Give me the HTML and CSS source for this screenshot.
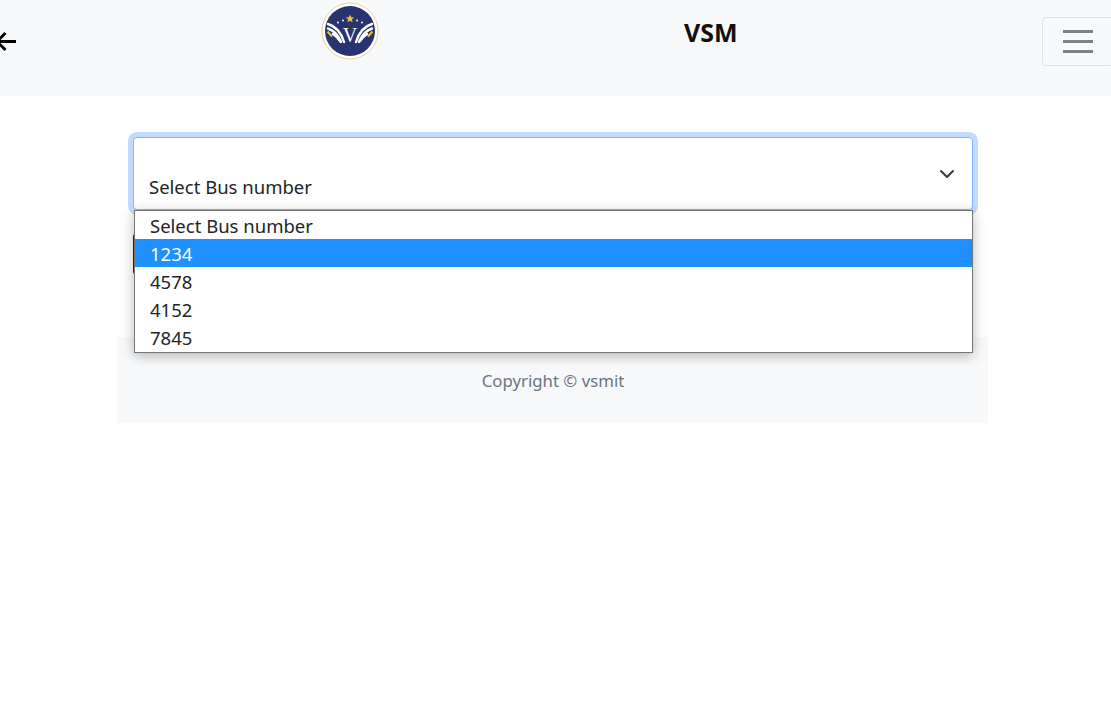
FILE: index.html
```html
<!DOCTYPE html>
<html lang="en">
<head>
    <meta charset="UTF-8">
    <meta name="viewport" content="width=device-width, initial-scale=1.0">
    <title>VSM</title>
    <link rel="stylesheet" href="styles.css">
</head>
<body>
    <nav class="navbar">
        <a class="back-link" href="#" aria-label="Back">
            <svg width="24" height="24" viewBox="0 0 24 24" fill="none" stroke="#000" stroke-width="3">
                <path d="M3 12.5H21"/>
                <path d="M10.5 4L2 12.5L10.5 21"/>
            </svg>
        </a>
        <a class="brand" href="#" aria-label="VSM home">
            <svg width="58" height="58" viewBox="0 0 58 58">
                <circle cx="29" cy="29" r="28" fill="#fff" stroke="#e3d59a" stroke-width="1"/>
                <circle cx="29" cy="29" r="25" fill="#27346f"/>
                <path d="M29 12.500l1.200 2.700 2.900.3-2.200 1.900.7 2.900-2.600-1.500-2.600 1.500.7-2.900-2.200-1.900 2.900-.3z" fill="#f2c230"/>
                <g fill="#fff">
                    <circle cx="17" cy="20.500" r="1"/>
                    <circle cx="22" cy="18.500" r="1"/>
                    <circle cx="36" cy="18.500" r="1"/>
                    <circle cx="41" cy="20.500" r="1"/>
                </g>
                <g fill="none" stroke="#fff" stroke-width="2.400" stroke-linecap="round">
                    <path d="M7 22C14 24 20 30 23 40"/>
                    <path d="M51 22C44 24 38 30 35 40"/>
                    <path d="M7 26.500C12 28 17 33 20 40"/>
                    <path d="M51 26.500C46 28 41 33 38 40"/>
                    <path d="M12 32C15 34 17 36 19 39"/>
                    <path d="M46 32C43 34 41 36 39 39"/>
                </g>
                <g fill="none" stroke="#f2c230" stroke-width="2">
                    <path d="M6.500 29.500L11 34.500"/>
                    <path d="M51.500 29.500L47 34.500"/>
                </g>
                <text class="logo-letter" x="29" y="40" text-anchor="middle">V</text>
            </svg>
        </a>
        <h1 class="nav-title">VSM</h1>
        <button class="nav-toggler" aria-label="Toggle navigation">
            <span class="toggler-bar"></span>
            <span class="toggler-bar"></span>
            <span class="toggler-bar"></span>
        </button>
    </nav>

    <main class="page">
        <form class="bus-form">
            <div class="select-box">
                <span class="select-value">Select Bus number</span>
                <svg class="select-arrow" width="16" height="16" viewBox="0 0 16 16" fill="none" stroke="#343a40" stroke-width="2" stroke-linecap="round" stroke-linejoin="round">
                    <path d="M2 5l6 6 6-6"/>
                </svg>
                <ul class="select-list">
                    <li>Select Bus number</li>
                    <li class="active">1234</li>
                    <li>4578</li>
                    <li>4152</li>
                    <li>7845</li>
                </ul>
            </div>
            <button class="submit-btn" type="button" aria-label="Submit"></button>
        </form>
        <footer class="page-footer">Copyright © vsmit</footer>
    </main>
</body>
</html>
```

FILE: styles.css
```css
* { box-sizing: border-box; }
body {
    margin: 0;
    background: #fff;
    color: #212529;
    font-family: "Noto Sans", "Open Sans", sans-serif;
    overflow: hidden;
}
.navbar {
    display: flex;
    height: 96px;
    background-color: #f8f9fa;
    position: relative;
    overflow: hidden;
}
.back-link { margin: 29px 0 0 -5px; height: 24px; }
.brand { margin: 2px 0 0 302px; height: 58px; }
.logo-letter { font-family: "Liberation Serif", serif; font-size: 20px; fill: #fff; }
.nav-title {
    margin: 16px 0 0 305px;
    font-size: 25px;
    line-height: 32px;
    font-weight: 700;
    color: #14100f;
}
.nav-toggler {
    display: flex;
    flex-direction: column;
    justify-content: center;
    gap: 7px;
    width: 72px;
    height: 49px;
    margin: 17px -3px 0 auto;
    padding: 0 0 0 20px;
    background: transparent;
    border: 1px solid #e1e2e3;
    border-radius: 4px;
}
.toggler-bar { width: 30px; height: 3px; background: #7f8183; }

.page { width: 870px; margin: 0 auto 0 118px; }
.bus-form { padding: 41px 15px 0; height: 241px; }
.select-box {
    position: relative;
    height: 73px;
    padding: 37px 15px 0;
    background: #fff;
    border: 1px solid #86b7fe;
    border-radius: 4px;
    box-shadow: 0 0 0 5px #c2dbfe;
    font-size: 18.5px;
    line-height: 24px;
}
.select-value { color: #212529; }
.select-arrow { position: absolute; right: 17px; top: 28px; }
.select-list {
    position: absolute;
    z-index: 2;
    top: 72px;
    left: 0;
    right: -1px;
    margin: 0;
    padding: 0 0 1px;
    list-style: none;
    background: #fff;
    border: 1px solid #767676;
    box-shadow: 0 3px 12px rgba(0,0,0,0.28);
    font-size: 18.5px;
}
.select-list li { height: 28px; padding-left: 15px; line-height: 30px; }
.select-list .active { background: #1e90ff; color: #fff; }
.submit-btn {
    display: block;
    width: 100px;
    height: 42px;
    margin-top: 23px;
    background: #0d0de0;
    border: none;
    border-radius: 4px;
}
.page-footer {
    height: 86px;
    padding-top: 32px;
    background: #f8f9fa;
    color: #6c757d;
    font-size: 16.8px;
    line-height: 24px;
    text-align: center;
}
```
